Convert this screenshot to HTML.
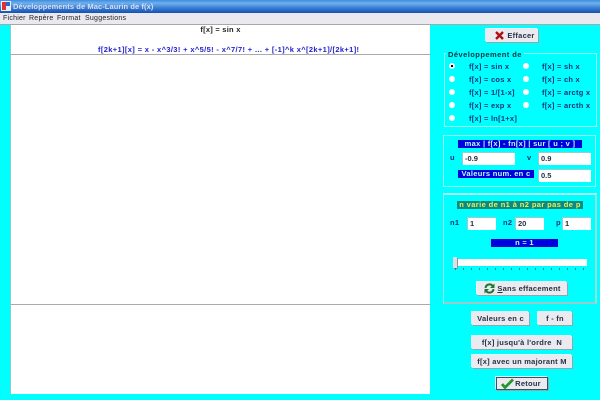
<!DOCTYPE html>
<html lang="fr"><head><meta charset="utf-8"><title>Développements de Mac-Laurin de f(x)</title>
<style>
html,body{margin:0;padding:0}
body{width:600px;height:400px;overflow:hidden;position:relative;background:#0ff;font-family:"Liberation Sans",sans-serif;font-size:7.5px;font-weight:bold;color:#123;filter:blur(.3px)}
div,span{position:absolute;box-sizing:border-box;white-space:nowrap}
.t{line-height:9px;height:9px;letter-spacing:.25px}
.c{text-align:center}
.b{background:#eceaf0;box-shadow:1px 1px 0 #8aa,-1px -1px 0 #dff;text-align:center;line-height:13px;height:13px;color:#234;letter-spacing:.25px}
.i{background:#fff;color:#234;line-height:12px;height:12px;padding-left:2px;font-size:7.5px;box-shadow:-1px -1px 0 #9cc}
.h{background:#00d;color:#bff;text-align:center;line-height:8px;height:8px;letter-spacing:.3px}
.r{width:6px;height:6px;border-radius:50%;background:#fff;left:449px}
.f{color:#137;}
.g{border:1px solid #9fe;}
</style></head><body>
<div style="left:0;top:0;width:600px;height:13px;background:linear-gradient(#3f8de0,#6fb0ea 25%,#3a7fd6 60%,#1450b0)"></div>
<svg style="position:absolute;left:1px;top:1px" width="10" height="10"><rect width="10" height="10" fill="#e8f0ff"/><rect x="1" y="1" width="4" height="8" fill="#d33"/><rect x="5" y="1" width="4" height="4" fill="#36c"/></svg>
<div class="t" style="left:13px;top:2px;color:#dde;font-size:7.5px;letter-spacing:.08px">Développements de Mac-Laurin de f(x)</div>
<div style="left:0;top:13px;width:600px;height:11px;background:#ebe9f0"></div>
<div style="left:0;top:24px;width:600px;height:1px;background:#a8a8a8"></div>
<div class="t" style="left:3px;top:14px;font-weight:normal;font-size:7px;color:#222">Fichier</div>
<div class="t" style="left:29px;top:14px;font-weight:normal;font-size:7px;color:#222">Repère</div>
<div class="t" style="left:57px;top:14px;font-weight:normal;font-size:7px;color:#222">Format</div>
<div class="t" style="left:85px;top:14px;font-weight:normal;font-size:7px;color:#222">Suggestions</div>

<div style="left:10px;top:25px;width:420px;height:369px;background:#fff;border-left:1px solid #8cc"></div>
<div style="left:11px;top:54px;width:419px;height:1px;background:#aaa"></div>
<div style="left:11px;top:304px;width:419px;height:1px;background:#aaa"></div>
<div class="t c" style="left:11px;top:25px;width:419px;color:#222;font-size:7.5px">f[x] = sin x</div>
<div class="t" style="left:98px;top:45px;color:#22c;letter-spacing:.36px">f[2k+1][x] = x - x^3/3! + x^5/5! - x^7/7! + ... + [-1]^k x^[2k+1]/[2k+1]!</div>

<div class="b" style="left:486px;top:29px;width:52px;padding-left:18px">Effacer</div>
<svg style="position:absolute;left:495px;top:31px" width="9" height="9"><path d="M1 1L8 8M8 1L1 8" stroke="#b01010" stroke-width="2.4"/></svg>

<div class="g" style="left:444px;top:53px;width:153px;height:74px"></div>
<div class="t" style="left:446px;top:50px;background:#0ff;padding:0 2px;color:#134;letter-spacing:.45px">Développement de</div>
<div class="r" style="top:63px"></div><div style="left:451px;top:65px;width:2px;height:2px;background:#000"></div>
<div class="r" style="top:76px"></div><div class="r" style="top:89px"></div><div class="r" style="top:102px"></div><div class="r" style="top:115px"></div>
<div class="r" style="top:63px;left:523px"></div><div class="r" style="top:76px;left:523px"></div><div class="r" style="top:89px;left:523px"></div><div class="r" style="top:102px;left:523px"></div>
<div class="t f" style="left:469px;top:62px">f[x] = sin x</div>
<div class="t f" style="left:469px;top:75px">f[x] = cos x</div>
<div class="t f" style="left:469px;top:88px">f[x] = 1/[1-x]</div>
<div class="t f" style="left:469px;top:101px">f[x] = exp x</div>
<div class="t f" style="left:469px;top:114px">f[x] = ln[1+x]</div>
<div class="t f" style="left:542px;top:62px">f[x] = sh x</div>
<div class="t f" style="left:542px;top:75px">f[x] = ch x</div>
<div class="t f" style="left:542px;top:88px">f[x] = arctg x</div>
<div class="t f" style="left:542px;top:101px">f[x] = arcth x</div>

<div class="g" style="left:443px;top:135px;width:153px;height:52px"></div>
<div class="h" style="left:458px;top:140px;width:124px">max | f[x] - fn[x] | sur [ u ; v ]</div>
<div class="t f" style="left:450px;top:153px">u</div>
<div class="i" style="left:463px;top:153px;width:52px">-0.9</div>
<div class="t f" style="left:527px;top:153px">v</div>
<div class="i" style="left:539px;top:153px;width:52px">0.9</div>
<div class="h" style="left:458px;top:170px;width:76px">Valeurs num. en c</div>
<div class="i" style="left:539px;top:170px;width:52px">0.5</div>

<div style="left:443px;top:193px;width:154px;height:111px;border:1px solid #9ee;border-top:2px solid #aff;border-right:2px solid #9dd;border-bottom:2px solid #9cc"></div>
<div class="t c" style="left:457px;top:201px;width:126px;background:#0a8a80;color:#ee5;line-height:8px;height:8px;letter-spacing:.4px">n varie de n1 à n2 par pas de p</div>
<div class="t f" style="left:450px;top:218px">n1</div>
<div class="i" style="left:468px;top:218px;width:28px">1</div>
<div class="t f" style="left:503px;top:218px">n2</div>
<div class="i" style="left:516px;top:218px;width:28px">20</div>
<div class="t f" style="left:556px;top:218px">p</div>
<div class="i" style="left:563px;top:218px;width:28px">1</div>
<div class="h" style="left:491px;top:239px;width:67px">n = 1</div>
<div style="left:453px;top:259px;width:134px;height:7px;background:#fff"></div>
<div style="left:453px;top:257px;width:4px;height:11px;background:#dde;box-shadow:1px 1px 0 #899"></div>
<svg style="position:absolute;left:450px;top:268px" width="140" height="3"><path d="M5 1h1M13 1h1M21 1h1M29 1h1M37 1h1M45 1h1M53 1h1M61 1h1M69 1h1M77 1h1M85 1h1M93 1h1M101 1h1M109 1h1M117 1h1M125 1h1M133 1h1" stroke="#267" stroke-width="1.5"/></svg>
<div class="b" style="left:477px;top:282px;width:90px;padding-left:14px"><u style="text-decoration:underline">S</u>ans effacement</div>
<svg style="position:absolute;left:484px;top:283px" width="11" height="11" viewBox="0 0 11 11"><path d="M1.500 5A4 4 0 0 1 9 3.500" fill="none" stroke="#187a30" stroke-width="2"/><path d="M9.500 6A4 4 0 0 1 2 7.500" fill="none" stroke="#187a30" stroke-width="2"/><path d="M10.500 .5V5H6zM.5 10.500V6H5z" fill="#187a30"/></svg>

<div class="b" style="left:472px;top:312px;width:57px">Valeurs en c</div>
<div class="b" style="left:538px;top:312px;width:34px">f - fn</div>
<div class="b" style="left:472px;top:336px;width:100px">f[x] jusqu'à l'ordre&nbsp; N</div>
<div class="b" style="left:472px;top:355px;width:100px">f[x] avec un majorant M</div>
<div class="b" style="left:496px;top:377px;width:52px;padding-left:12px;border:1px solid #356;line-height:11px">Retour</div>
<svg style="position:absolute;left:501px;top:378px" width="13" height="11" viewBox="0 0 13 11"><path d="M1 6L4 9.500L12 1.500" fill="none" stroke="#1f9a2a" stroke-width="2.800"/></svg>
</body></html>
